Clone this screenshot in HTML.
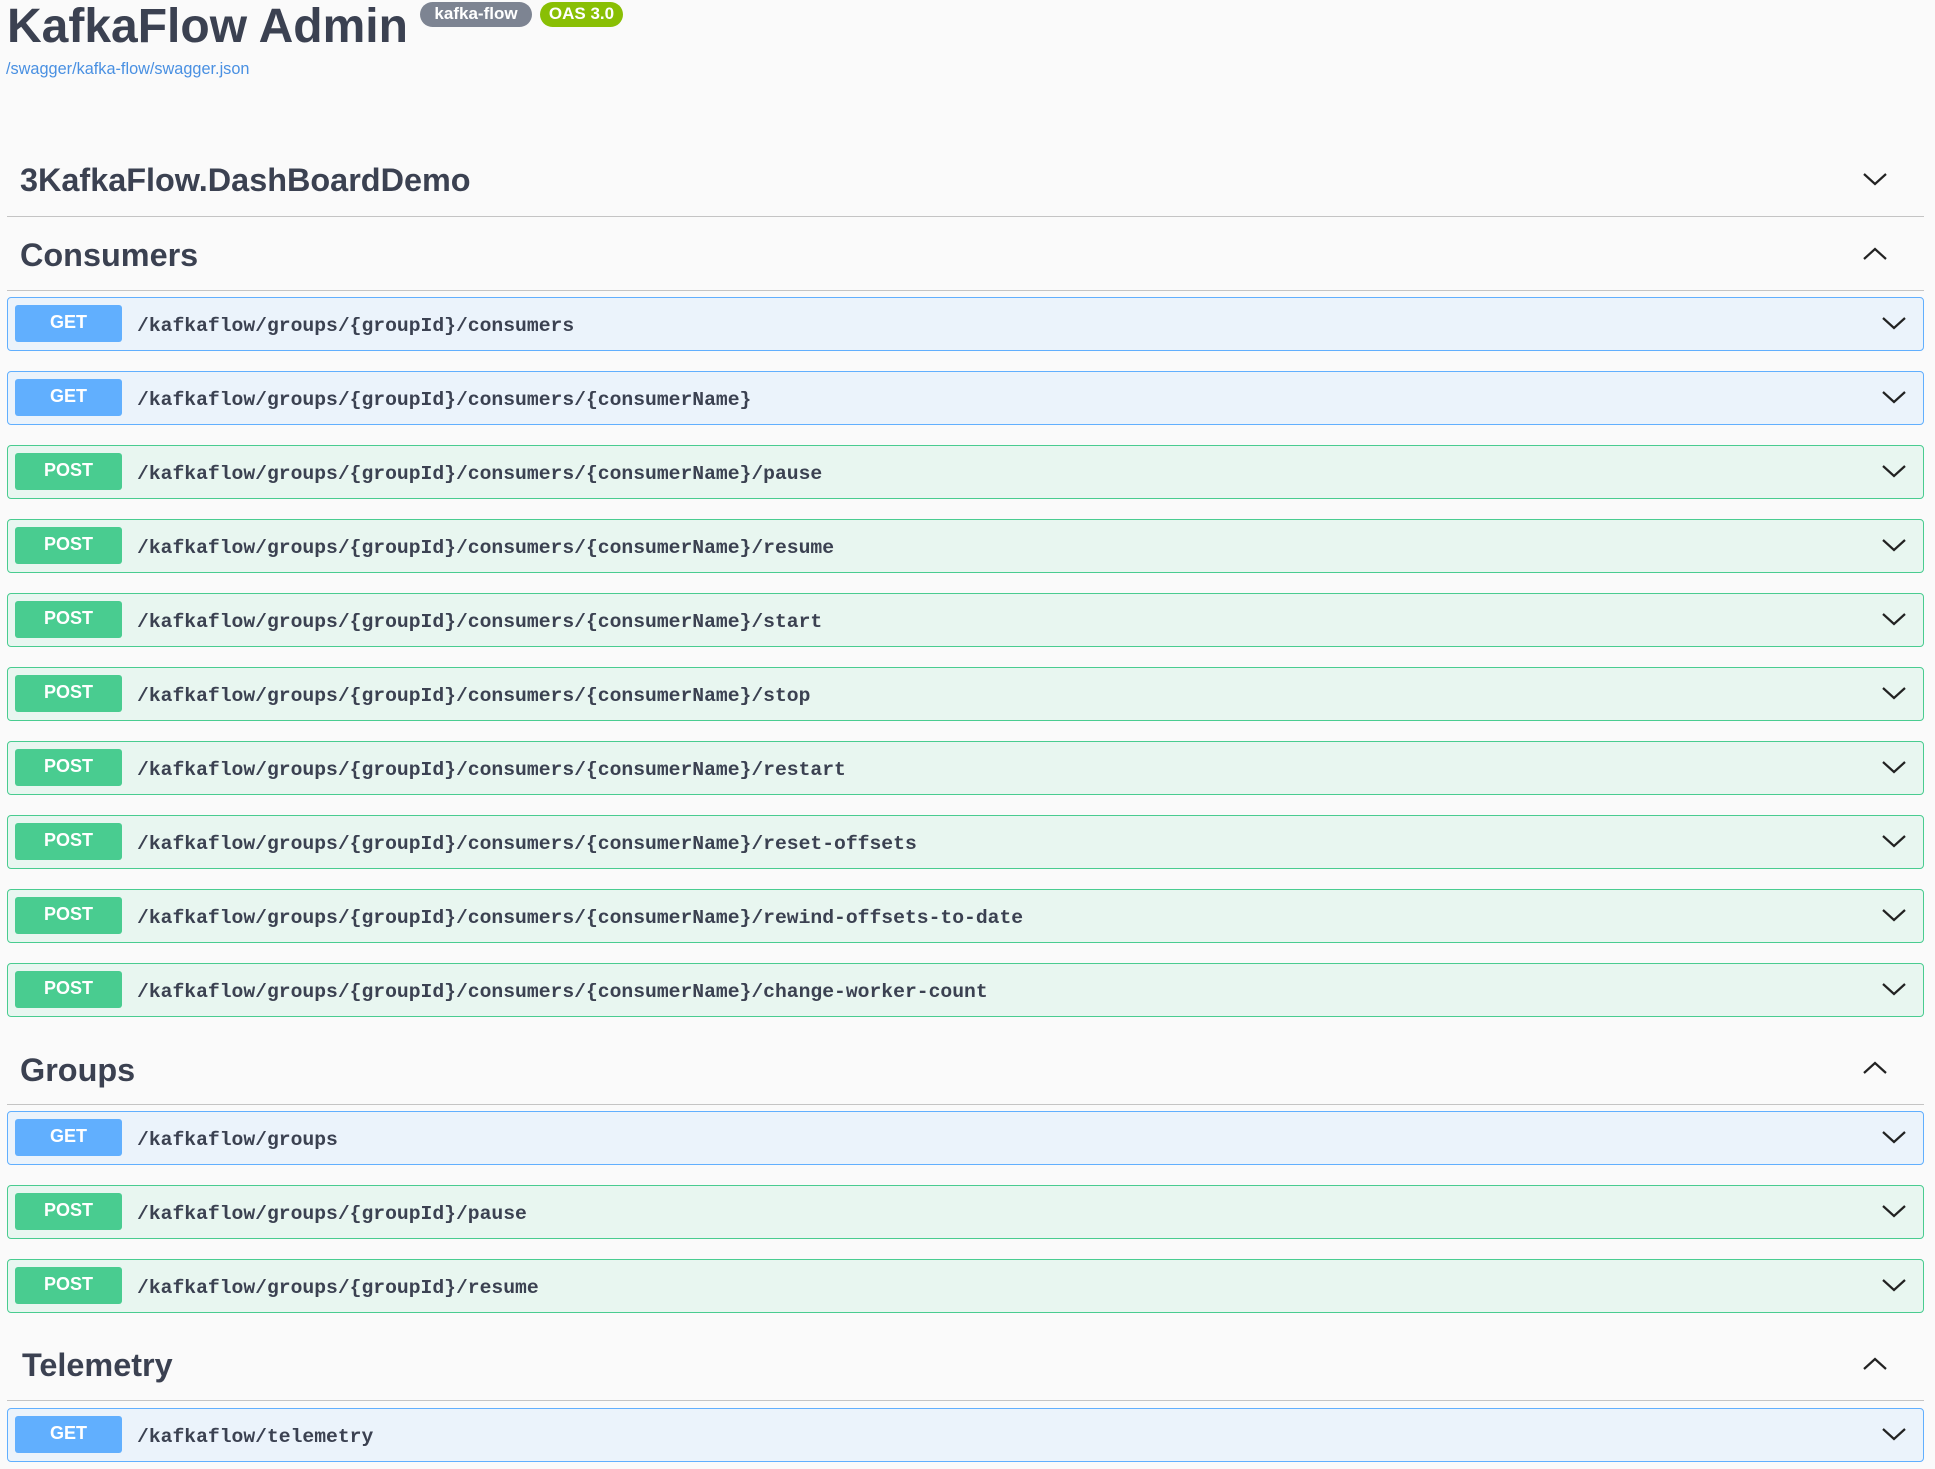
<!DOCTYPE html>
<html><head><meta charset="utf-8"><style>
*{margin:0;padding:0;box-sizing:border-box}
body{width:1935px;height:1469px;background:#fafafa;position:relative;overflow:hidden;font-family:"Liberation Sans",sans-serif;color:#3b4151}
.a{position:absolute}
.title{left:7px;top:-1px;font-size:48px;font-weight:bold;white-space:nowrap}
.badge{top:2px;height:25px;border-radius:13px;color:#fff;font-weight:bold;font-size:17px;line-height:24px;text-align:center}
.link{left:6px;top:60px;font-size:16.3px;color:#4990e2}
.h{left:20px;font-size:32.4px;font-weight:bold;white-space:nowrap}
.line{left:7px;width:1917px;height:1px;background:#c4c4c4}
.row{left:7px;width:1917px;height:54px;border:1px solid;border-radius:4px}
.get{background:#ebf3fb;border-color:#61affe}
.post{background:#e8f6f0;border-color:#49cc90}
.m{position:absolute;left:7px;top:7px;width:107px;height:37px;border-radius:3px;color:#fff;font-weight:bold;font-size:18px;line-height:35px;text-align:center}
.get .m{background:#61affe}.post .m{background:#49cc90}
.p{position:absolute;left:129px;top:17px;font-family:"Liberation Mono",monospace;font-weight:bold;font-size:19.7px;white-space:nowrap;color:#3b4151}
.chev{position:absolute;right:16px;top:17px;width:26px;height:16px}
.hc{width:26px;height:16px}
</style></head><body>
<div class="a title">KafkaFlow Admin</div>
<div class="a badge" style="left:420px;width:112px;background:#7d8492">kafka-flow</div>
<div class="a badge" style="left:540px;width:83px;background:#89bf04">OAS 3.0</div>
<div class="a link">/swagger/kafka-flow/swagger.json</div>

<div class="a h" style="top:162px">3KafkaFlow.DashBoardDemo</div>
<svg class="a hc" style="left:1862px;top:171px" viewBox="0 0 26 16"><path d="M2 3 L13 13 L24 3" fill="none" stroke="#222" stroke-width="2.2"/></svg>
<div class="a line" style="top:216px"></div>

<div class="a h" style="top:237px">Consumers</div>
<svg class="a hc" style="left:1862px;top:246px" viewBox="0 0 26 16"><path d="M2 13 L13 3 L24 13" fill="none" stroke="#222" stroke-width="2.2"/></svg>
<div class="a line" style="top:290px"></div>

<div class="a row get" style="top:297px"><div class="m">GET</div><div class="p">/kafkaflow/groups/{groupId}/consumers</div><svg class="chev" viewBox="0 0 26 16"><path d="M2 3 L13 13 L24 3" fill="none" stroke="#222" stroke-width="2.2"/></svg></div>
<div class="a row get" style="top:371px"><div class="m">GET</div><div class="p">/kafkaflow/groups/{groupId}/consumers/{consumerName}</div><svg class="chev" viewBox="0 0 26 16"><path d="M2 3 L13 13 L24 3" fill="none" stroke="#222" stroke-width="2.2"/></svg></div>
<div class="a row post" style="top:445px"><div class="m">POST</div><div class="p">/kafkaflow/groups/{groupId}/consumers/{consumerName}/pause</div><svg class="chev" viewBox="0 0 26 16"><path d="M2 3 L13 13 L24 3" fill="none" stroke="#222" stroke-width="2.2"/></svg></div>
<div class="a row post" style="top:519px"><div class="m">POST</div><div class="p">/kafkaflow/groups/{groupId}/consumers/{consumerName}/resume</div><svg class="chev" viewBox="0 0 26 16"><path d="M2 3 L13 13 L24 3" fill="none" stroke="#222" stroke-width="2.2"/></svg></div>
<div class="a row post" style="top:593px"><div class="m">POST</div><div class="p">/kafkaflow/groups/{groupId}/consumers/{consumerName}/start</div><svg class="chev" viewBox="0 0 26 16"><path d="M2 3 L13 13 L24 3" fill="none" stroke="#222" stroke-width="2.2"/></svg></div>
<div class="a row post" style="top:667px"><div class="m">POST</div><div class="p">/kafkaflow/groups/{groupId}/consumers/{consumerName}/stop</div><svg class="chev" viewBox="0 0 26 16"><path d="M2 3 L13 13 L24 3" fill="none" stroke="#222" stroke-width="2.2"/></svg></div>
<div class="a row post" style="top:741px"><div class="m">POST</div><div class="p">/kafkaflow/groups/{groupId}/consumers/{consumerName}/restart</div><svg class="chev" viewBox="0 0 26 16"><path d="M2 3 L13 13 L24 3" fill="none" stroke="#222" stroke-width="2.2"/></svg></div>
<div class="a row post" style="top:815px"><div class="m">POST</div><div class="p">/kafkaflow/groups/{groupId}/consumers/{consumerName}/reset-offsets</div><svg class="chev" viewBox="0 0 26 16"><path d="M2 3 L13 13 L24 3" fill="none" stroke="#222" stroke-width="2.2"/></svg></div>
<div class="a row post" style="top:889px"><div class="m">POST</div><div class="p">/kafkaflow/groups/{groupId}/consumers/{consumerName}/rewind-offsets-to-date</div><svg class="chev" viewBox="0 0 26 16"><path d="M2 3 L13 13 L24 3" fill="none" stroke="#222" stroke-width="2.2"/></svg></div>
<div class="a row post" style="top:963px"><div class="m">POST</div><div class="p">/kafkaflow/groups/{groupId}/consumers/{consumerName}/change-worker-count</div><svg class="chev" viewBox="0 0 26 16"><path d="M2 3 L13 13 L24 3" fill="none" stroke="#222" stroke-width="2.2"/></svg></div>

<div class="a h" style="top:1052px">Groups</div>
<svg class="a hc" style="left:1862px;top:1060px" viewBox="0 0 26 16"><path d="M2 13 L13 3 L24 13" fill="none" stroke="#222" stroke-width="2.2"/></svg>
<div class="a line" style="top:1104px"></div>
<div class="a row get" style="top:1111px"><div class="m">GET</div><div class="p">/kafkaflow/groups</div><svg class="chev" viewBox="0 0 26 16"><path d="M2 3 L13 13 L24 3" fill="none" stroke="#222" stroke-width="2.2"/></svg></div>
<div class="a row post" style="top:1185px"><div class="m">POST</div><div class="p">/kafkaflow/groups/{groupId}/pause</div><svg class="chev" viewBox="0 0 26 16"><path d="M2 3 L13 13 L24 3" fill="none" stroke="#222" stroke-width="2.2"/></svg></div>
<div class="a row post" style="top:1259px"><div class="m">POST</div><div class="p">/kafkaflow/groups/{groupId}/resume</div><svg class="chev" viewBox="0 0 26 16"><path d="M2 3 L13 13 L24 3" fill="none" stroke="#222" stroke-width="2.2"/></svg></div>

<div class="a h" style="top:1347px;left:22px">Telemetry</div>
<svg class="a hc" style="left:1862px;top:1356px" viewBox="0 0 26 16"><path d="M2 13 L13 3 L24 13" fill="none" stroke="#222" stroke-width="2.2"/></svg>
<div class="a line" style="top:1400px"></div>
<div class="a row get" style="top:1408px"><div class="m">GET</div><div class="p">/kafkaflow/telemetry</div><svg class="chev" viewBox="0 0 26 16"><path d="M2 3 L13 13 L24 3" fill="none" stroke="#222" stroke-width="2.2"/></svg></div>
</body></html>
